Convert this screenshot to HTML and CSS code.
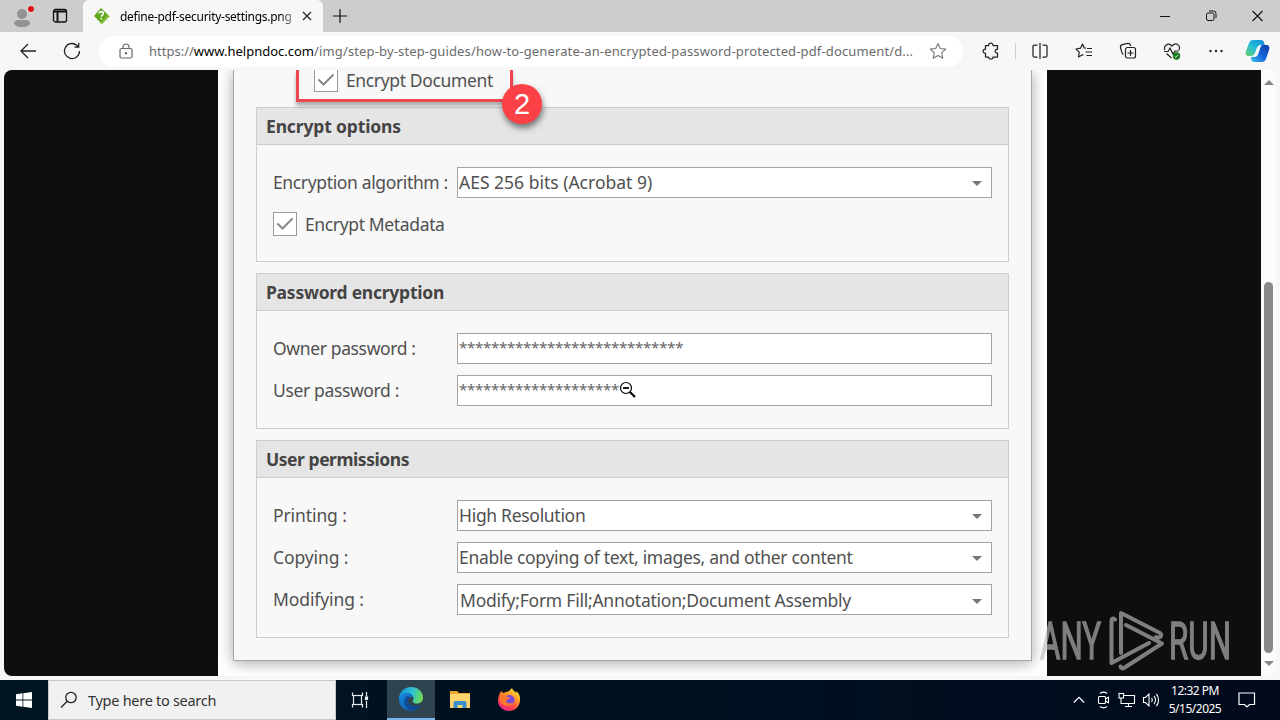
FILE: index.html
```
<!DOCTYPE html>
<html lang="en">
<head>
    <meta charset="UTF-8">
    <meta name="viewport" content="width=device-width, initial-scale=1.0">
    <title>define-pdf-security-settings.png</title>
    <link rel="stylesheet" href="styles.css">
</head>
<body>
    <div class="desktop">
        <div class="tabbar">
            <div class="tab-tools">
                <svg class="profile" width="24" height="24" viewBox="0 0 24 24">
                    <circle cx="12" cy="10" r="5" fill="#929292"/>
                    <path d="M4 20c0-3 2-4 4-4h8c2 0 4 1 4 4-2 2.500-5 3-8 3s-6-.5-8-3z" fill="#929292"/>
                    <circle cx="21" cy="5" r="4" fill="#e8d2d2"/>
                    <circle cx="21" cy="5" r="3" fill="#d9141c"/>
                </svg>
                <svg class="tabs-icon" width="16" height="16" viewBox="0 0 16 16" fill="none" stroke="#111" stroke-width="1.300">
                    <rect x="1.500" y="1.500" width="13" height="12.500" rx="2"/>
                    <path d="M2 3.500h12M5.500 4v9.500" stroke-width="2"/>
                </svg>
            </div>
            <div class="tab">
                <svg width="18" height="18" viewBox="0 0 18 18">
                    <path d="M8 1l7 7-7 8-7-7z" fill="#5fa81c"/>
                    <path d="M15 8l2 1-8 8-2-1z" fill="#7fbc36"/>
                    <path d="M6.300 6.500c0-2.500 4-2.500 4 0 0 1.700-2 1.500-2 3.200M8.300 11v1.500" fill="none" stroke="#fff" stroke-width="1.600"/>
                </svg>
                <span class="tab-title">define-pdf-security-settings.png</span>
                <svg class="tab-close" width="10" height="10" viewBox="0 0 10 10" stroke="#222" stroke-width="1.200"><path d="M1 1l8 8M9 1l-8 8"/></svg>
            </div>
            <svg class="new-tab" width="14" height="14" viewBox="0 0 14 14" stroke="#111" stroke-width="1.200"><path d="M7 0v14M0 7h14"/></svg>
            <div class="window-buttons">
                <svg width="11" height="12" viewBox="0 0 11 12" stroke="#111"><path d="M0 6.500h10"/></svg>
                <svg width="11" height="12" viewBox="0 0 11 12" fill="none" stroke="#111"><rect x=".5" y="3" width="7.500" height="7.500" rx="1.500"/><path d="M3 1h4.500a2.500 2.500 0 0 1 2.500 2.500v4.500"/></svg>
                <svg width="11" height="12" viewBox="0 0 11 12" stroke="#111" stroke-width="1.100"><path d="M.5 1l10 10M10.500 1l-10 10"/></svg>
            </div>
        </div>

        <div class="toolbar">
            <svg class="back" width="18" height="16" viewBox="0 0 18 16" fill="none" stroke="#222" stroke-width="1.300"><path d="M17 8H2M9 1L2 8l7 7"/></svg>
            <svg class="reload" width="18" height="18" viewBox="0 0 18 18" fill="none" stroke="#222" stroke-width="1.300"><path d="M16.500 9a7.500 7.500 0 1 1-2.800-5.800L15.500 5M15.700 1v4.200h-4.200"/></svg>
            <div class="address">
                <svg class="lock" width="14" height="16" viewBox="0 0 14 16" fill="none" stroke="#666" stroke-width="1.200"><rect x="1" y="5.500" width="12" height="9.500" rx="1.500"/><path d="M4 5.500V4a3 3 0 0 1 6 0v1.500"/><circle cx="7" cy="10.300" r=".6" fill="#555"/></svg>
                <div class="url"><span class="scheme">https://</span><span class="domain">www.helpndoc.com</span><span class="path">/img/step-by-step-guides/how-to-generate-an-encrypted-password-protected-pdf-document/d...</span></div>
                <svg class="star" width="18" height="18" viewBox="0 0 18 18" fill="none" stroke="#777" stroke-width="1.100" stroke-linejoin="round"><path d="M9 1.500l2.300 5 5.400.6-4 3.700 1.100 5.400L9 13.500l-4.800 2.700 1.100-5.400-4-3.700 5.400-.6z"/></svg>
            </div>
            <div class="actions">
                <svg width="18" height="18" viewBox="0 0 18 18" fill="none" stroke="#222" stroke-width="1.250" stroke-linejoin="round"><path d="M3.500 3.500h3.200c-.3-3.300 4.600-3.300 4.300 0h4.500v3.700c-3-.3-3 4.300 0 4v3.800H11c.3 2.900-4.600 2.900-4.300 0H3.500v-3.800c-3.200.3-3.200-4.300 0-4z"/></svg>
                <i class="divider"></i>
                <svg width="18" height="18" viewBox="0 0 18 18" fill="none" stroke="#222" stroke-width="1.250"><path d="M9 1v16M6.500 3H3.200C2.400 3 2 3.500 2 4.200v9.600c0 .7.400 1.200 1.200 1.200h3.300M11.500 3h3.300c.8 0 1.200.5 1.200 1.200v9.600c0 .7-.4 1.200-1.200 1.200h-3.300"/></svg>
                <svg width="18" height="18" viewBox="0 0 18 18" fill="none" stroke="#222" stroke-width="1.200" stroke-linejoin="round"><path d="M11 6.200L9.300 6 7.500 2 5.500 6.200 1 7l3.300 3.300L3.500 15l4-2.300 1 .6M12 6.500h5M10.500 10H17M11.500 13.500H17"/></svg>
                <svg width="18" height="18" viewBox="0 0 18 18" fill="none" stroke="#222" stroke-width="1.200"><rect x="6.500" y="5.500" width="10" height="10.500" rx="2"/><path d="M11.500 8v6M8.500 11h6M4.500 12.500C3 12 2.800 10.500 2.500 9L1.500 5.500C1.200 4 2 3 3.500 2.600l5-1.200c1.500-.3 2.500.3 3 1.800l.3 1"/></svg>
                <svg width="18" height="18" viewBox="0 0 18 18" fill="none" stroke="#222" stroke-width="1.200"><path d="M2 8C0 4.500 5-.500 9 4c4-4.500 9-.5 7 4M1 9.500h4L7 6l3 6 2-3h4M3.500 11.500L8.500 16"/><circle cx="13.500" cy="14" r="3.700" fill="#16791d" stroke="none"/><path d="M11.700 14.300l1.200 1 2.300-2.500" stroke="#fff" stroke-width=".8"/></svg>
                <svg width="18" height="18" viewBox="0 0 18 18" fill="#222"><circle cx="3.500" cy="9" r="1.200"/><circle cx="9" cy="9" r="1.200"/><circle cx="14.500" cy="9" r="1.200"/></svg>
            </div>
            <svg class="copilot" width="26" height="24" viewBox="0 0 26 24">
                <defs>
                    <linearGradient id="cp1" x1="1" y1="0" x2="0" y2="1"><stop stop-color="#1686da"/><stop offset=".5" stop-color="#22bbdc"/><stop offset="1" stop-color="#6bd36a"/></linearGradient>
                    <linearGradient id="cp2" x1="1" y1="0" x2="0" y2="1"><stop stop-color="#123ba6"/><stop offset=".55" stop-color="#1768dc"/><stop offset="1" stop-color="#3bc7ef"/></linearGradient>
                </defs>
                <path d="M8 1h8c3 0 3 3 4 5h-4c-3 0-4 2-5 5l-1 3c-1 2-2 3-4 3H4c-3 0-4-2-3-5l3-8c1-2 2-3 4-3z" fill="url(#cp1)"/>
                <path d="M18 6h3c3 0 4 2 3 5l-3 9c-1 2-2 3-4 3H9c-2 0-3-2-3-5h3c3 0 4-2 5-5l1-4c.5-2 1.500-3 3-3z" fill="url(#cp2)"/>
                <path d="M16 7c-3 0-4 2-4.500 4.500L10 16.500c2-.5 3-2 3.500-4z" fill="#f4f8fa"/>
            </svg>
        </div>

        <div class="viewport">
            <div class="page">
                <div class="image">
                    <div class="dialog">
                        <div class="encrypt-document">
                            <div class="highlight">
                                <span class="checkbox"><svg width="18" height="14" viewBox="0 0 18 14"><path d="M1.500 6.500L6.500 11.500 16.500 1.500"/></svg></span>
                                <span class="label">Encrypt Document</span>
                                <span class="step">2</span>
                            </div>
                        </div>

                        <div class="group group-options">
                            <h2>Encrypt options</h2>
                            <div class="row">
                                <span class="label">Encryption algorithm :</span>
                                <div class="field select algorithm"><span>AES 256 bits (Acrobat 9)</span></div>
                            </div>
                            <div class="row">
                                <span class="checkbox"><svg width="18" height="14" viewBox="0 0 18 14"><path d="M1.500 6.500L6.500 11.500 16.500 1.500"/></svg></span>
                                <span class="label">Encrypt Metadata</span>
                            </div>
                        </div>

                        <div class="group group-password">
                            <h2>Password encryption</h2>
                            <div class="row">
                                <span class="label">Owner password :</span>
                                <div class="field password"><span>****************************</span></div>
                            </div>
                            <div class="row">
                                <span class="label">User password :</span>
                                <div class="field password"><span>********************</span></div>
                            </div>
                        </div>

                        <div class="group group-permissions">
                            <h2>User permissions</h2>
                            <div class="row">
                                <span class="label">Printing :</span>
                                <div class="field select"><span>High Resolution</span></div>
                            </div>
                            <div class="row">
                                <span class="label">Copying :</span>
                                <div class="field select"><span>Enable copying of text, images, and other content</span></div>
                            </div>
                            <div class="row">
                                <span class="label">Modifying :</span>
                                <div class="field select modify"><span>Modify;Form Fill;Annotation;Document Assembly</span></div>
                            </div>
                        </div>
                    </div>
                </div>
            </div>
            <div class="scrollbar">
                <i class="arrow-up"></i>
                <i class="thumb"></i>
                <i class="arrow-down"></i>
            </div>
        </div>

        <div class="taskbar">
            <div class="start">
                <svg width="16" height="16" viewBox="0 0 16 16" fill="#fff"><path d="M0 2.200l6.500-.9v6.300H0zM7.300 1.200L16 0v7.600H7.300zM0 8.400h6.500v6.300L0 13.800zM7.300 8.400H16V16l-8.700-1.200z"/></svg>
            </div>
            <div class="search">
                <svg width="18" height="18" viewBox="0 0 18 18" fill="none" stroke="#222" stroke-width="1.300"><circle cx="11" cy="6.500" r="5.200"/><path d="M7.200 10.300L1 16.500"/></svg>
                <span>Type here to search</span>
            </div>
            <div class="app task-view">
                <svg width="18" height="18" viewBox="0 0 18 18" fill="none" stroke="#e8edf0" stroke-width="1.200"><path d="M1.500 1.500v3h10v-3M1.500 16.500v-3h10v3M15.500 1v4M15.500 10v7"/><rect x="2.500" y="4.500" width="8" height="9"/><rect x="14.500" y="6" width="2" height="2.500" fill="#fff"/></svg>
            </div>
            <div class="app active">
                <svg width="24" height="24" viewBox="0 0 24 24">
                    <defs>
                        <linearGradient id="eg1" x1="0" y1=".3" x2="1" y2=".5"><stop stop-color="#168fd2"/><stop offset=".55" stop-color="#32c2d0"/><stop offset="1" stop-color="#6edb50"/></linearGradient>
                        <linearGradient id="eg2" x1="0" y1="0" x2="1" y2="1"><stop stop-color="#1689dc"/><stop offset="1" stop-color="#0c4fa0"/></linearGradient>
                    </defs>
                    <path d="M0 12C0 5 5 0 12 0c7 0 12 5 12 10.500 0 4-3 6-6 6-3.500 0-5-1.500-4-3 1.500-2.500 0-5-4-5-5 0-8 2-10 3.500z" fill="url(#eg1)"/>
                    <path d="M0 12c0-4 4-6 8-6 4 0 6 2 6 4.500-3-1.500-6 1-5 4.500 1 4 6 5.500 12 3.500-2 3.500-5 5.500-9 5.500C5 24 0 19 0 12z" fill="url(#eg2)"/>
                    <path d="M8 9c-5 4-3 12 5 14.800 4-.3 7-2.500 8.500-5.300-6 2-11 .5-12.400-3.500C8.500 13 9 11 11 10z" fill="#104b94"/>
                </svg>
            </div>
            <div class="app">
                <svg width="22" height="20" viewBox="0 0 22 20"><path d="M1 1h7l2 2h11v15H1z" fill="#e9a92d"/><path d="M1 4h20v14H1z" fill="#ffd66b"/><path d="M4.500 18v-5c0-1 .5-2 2-2h9c1.500 0 2 1 2 2v5h-4v-3h-5v3z" fill="#3a8fd0"/></svg>
            </div>
            <div class="app">
                <svg width="24" height="24" viewBox="0 0 24 24">
                    <defs><linearGradient id="ff" x1=".9" y1="0" x2=".3" y2="1"><stop stop-color="#fff04a"/><stop offset=".4" stop-color="#ff9a22"/><stop offset=".75" stop-color="#ff4050"/><stop offset="1" stop-color="#e6258a"/></linearGradient></defs>
                    <path d="M3 5l1.500-2L6 5l3-1c1 0 2-.5 3-1l3-3c1 3 3 3 4 5l.5-2c3 3 4 6 3.500 10-.7 6-5 10-11 10S1 18.500 1 13c0-3 .7-6 2-8z" fill="url(#ff)"/>
                    <circle cx="12.500" cy="12" r="5" fill="#7849d6"/>
                    <path d="M3 8c3-2 6-.5 7 1l3 .5c0 2-3 1.500-4 3.500 1 3 5 3 7 1-1 6-11 5-13-1z" fill="#ff762e"/>
                </svg>
            </div>
            <div class="tray">
                <svg width="12" height="12" viewBox="0 0 12 12" fill="none" stroke="#fff" stroke-width="1.200"><path d="M.8 8.500L6 3.300l5.200 5.200"/></svg>
                <svg class="meet" width="14" height="18" viewBox="0 0 14 18" fill="none" stroke="#fff" stroke-width="1.100"><rect x="1.500" y="5.500" width="7" height="7" rx="1"/><path d="M8.500 8l3-1.800v5.600l-3-1.800M3 2.500c2-1.500 5-1.500 7 0M3 15.500c2 1.500 5 1.500 7 0"/></svg>
                <svg class="network" width="18" height="16" viewBox="0 0 18 16" fill="none" stroke="#fff" stroke-width="1.100"><path d="M6 3.500h10.500v8H5M10.500 11.500v3M7 14.500h7M3 6v5.500h2"/><rect x="1" y="1.500" width="4.500" height="4.500"/></svg>
                <svg class="volume" width="18" height="16" viewBox="0 0 18 16" fill="none" stroke="#fff" stroke-width="1.100"><path d="M1.500 5.500h2L7 2v12l-3.500-3.500h-2zM9.500 6c1 1 1 3 0 4M12 4c2 2 2 6 0 8M14.300 2c3 3 3 9 0 12"/></svg>
                <div class="clock">
                    <span class="time">12:32 PM</span>
                    <span class="date">5/15/2025</span>
                </div>
                <svg class="notifications" width="18" height="18" viewBox="0 0 18 18" fill="none" stroke="#fff" stroke-width="1.200"><path d="M1 2h15.500v11.500h-5L9 16l-2.500-2.500H1z"/></svg>
            </div>
        </div>

        <!-- magnifier cursor -->
        <svg class="cursor" width="18" height="18" viewBox="0 0 18 18">
            <path d="M10.500 10.500l5.500 5.500" stroke="#000" stroke-width="2.200"/>
            <circle cx="7" cy="7" r="5.500" fill="#fff" stroke="#000" stroke-width="1.200"/>
            <path d="M4 7h6" stroke="#000" stroke-width="1.800"/>
        </svg>

        <svg class="watermark" width="194" height="64" viewBox="0 0 194 64">
            <text x="2" y="50.500" textLength="61" lengthAdjust="spacingAndGlyphs">ANY</text>
            <g fill="none" stroke-width="4" stroke-linejoin="round" stroke-linecap="round">
                <path d="M77 11.500c-2-2-3.500-1-3.500 1.500v42L111 35"/>
                <path d="M83 45V5L122 25c3 2 0 6-4 4"/>
                <path d="M88 17l36 18.500L86 60c-1.500 1-3 0-3.500-1.500"/>
            </g>
            <text x="131" y="50.500" textLength="62" lengthAdjust="spacingAndGlyphs">RUN</text>
        </svg>
    </div>
</body>
</html>
```
FILE: styles.css
```
* {
    box-sizing: border-box;
}
body {
    margin: 0;
    font-family: "Noto Sans", "Open Sans", sans-serif;
    background: #f7f7f7;
    overflow: hidden;
}
svg {
    display: block;
    flex: none;
}
.desktop {
    position: relative;
    width: 1280px;
    height: 720px;
    display: flex;
    flex-direction: column;
    overflow: hidden;
}

/* browser tabs */
.tabbar {
    height: 32px;
    display: flex;
    align-items: center;
    background: #cdcdcd;
}
.tab-tools {
    width: 83px;
    height: 32px;
    display: flex;
    align-items: center;
    padding-left: 10px;
    gap: 18px;
}
.tab {
    width: 240px;
    height: 32px;
    display: flex;
    align-items: center;
    padding: 0 11px 0 10px;
    background: #f7f7f7;
    border-radius: 6px 6px 0 0;
}
.tab-title {
    width: 174px;
    margin: 0 8px 0 9px;
    flex: none;
    font-size: 12px;
    letter-spacing: -0.28px;
    white-space: nowrap;
    color: #000;
    -webkit-mask-image: linear-gradient(90deg, #000 92%, rgba(0, 0, 0, 0.35));
}
.new-tab {
    margin-left: 10px;
}
.window-buttons {
    display: flex;
    gap: 35px;
    margin-left: auto;
    padding-right: 17px;
}

/* toolbar */
.toolbar {
    height: 38px;
    display: flex;
    align-items: center;
    padding-left: 19px;
    background: #f7f7f7;
}
.reload {
    margin-left: 26px;
}
.address {
    width: 864px;
    height: 31px;
    margin-left: 18px;
    padding-left: 20px;
    display: flex;
    align-items: center;
    background: #fff;
    border-radius: 16px;
}
.url {
    width: 768px;
    margin-left: 16px;
    flex: none;
    font-size: 13px;
    color: #6b6b6b;
    white-space: nowrap;
}
.domain {
    color: #000;
}
.path {
    letter-spacing: 0.14px;
}
.star {
    margin-left: 12px;
}
.actions {
    display: flex;
    align-items: center;
    gap: 26px;
    margin-left: 19px;
}
.divider {
    width: 1px;
    height: 16px;
    margin: 0 -11px;
    background: #d0d0d0;
}
.copilot {
    margin-left: 20px;
}

/* page area */
.viewport {
    height: 610px;
    display: flex;
    padding: 0 4px 4px;
    background: #f7f7f7;
}
.page {
    width: 1257px;
    height: 606px;
    padding: 0 214px;
    background: #0e0e0e;
    border-radius: 8px 0 0 8px;
    overflow: hidden;
}
.image {
    width: 829px;
    height: 606px;
    padding: 0 15px;
    background: #fff;
}
.dialog {
    width: 799px;
    height: 591px;
    padding: 0 22px;
    background: #f8f8f8;
    border: 1px solid #a6a6a6;
    border-top: 0;
    box-shadow: 0 2px 14px rgba(0, 0, 0, 0.35);
    font-size: 17.5px;
    letter-spacing: -0.3px;
    color: #505050;
}
.encrypt-document {
    height: 37px;
    padding-left: 40px;
}
.highlight {
    position: relative;
    width: 217px;
    height: 32px;
    padding: 0 0 9px 15px;
    display: flex;
    align-items: center;
    border: 3px solid #ee4650;
    border-top: 0;
    box-shadow: 0 4px 4px rgba(0, 0, 0, 0.3);
}
.checkbox {
    width: 24px;
    height: 24px;
    margin: -1px 8px 0 0;
    display: flex;
    flex: none;
    align-items: center;
    justify-content: center;
    background: #fff;
    border: 1px solid #999;
}
.checkbox path {
    fill: none;
    stroke: #888;
    stroke-width: 2;
}
.step {
    position: absolute;
    left: 203px;
    top: 14px;
    width: 40px;
    height: 40px;
    border-radius: 50%;
    background: #fc4146;
    box-shadow: 1px 4px 6px rgba(0, 0, 0, 0.5);
    color: #fff;
    font: 29px/41px "Liberation Sans", Arial, sans-serif;
    text-align: center;
}
.group {
    width: 753px;
    border: 1px solid #cdcdcd;
}
.group-options {
    height: 155px;
}
.group-password {
    height: 156px;
    margin-top: 11px;
}
.group-permissions {
    height: 198px;
    margin-top: 11px;
}
.group h2 {
    height: 37px;
    margin: 0 0 22px;
    padding-left: 9px;
    background: #e5e5e5;
    border-bottom: 1px solid #cdcdcd;
    font-size: 17.5px;
    line-height: 37px;
    color: #444;
}
.group-options h2 {
    letter-spacing: -0.15px;
}
.group-password h2 {
    letter-spacing: -0.25px;
}
.group-permissions h2 {
    letter-spacing: -0.46px;
}
.row {
    height: 31px;
    margin-bottom: 11px;
    padding-left: 16px;
    display: flex;
    align-items: center;
    white-space: nowrap;
}
.label {
    width: 184px;
    padding-bottom: 1px;
    flex: none;
    letter-spacing: -0.36px;
}
.group-permissions .label {
    letter-spacing: -0.1px;
}
.field {
    width: 535px;
    height: 31px;
    padding: 0 0 1px 1px;
    display: flex;
    align-items: center;
    background: #fff;
    border: 1px solid #a3a3a3;
}
.select {
    justify-content: space-between;
    padding-right: 9px;
}
.select::after {
    content: "";
    margin-top: 2px;
    border: 5px solid transparent;
    border-top-color: #777;
    border-bottom: 0;
}
.algorithm {
    letter-spacing: 0;
}
.modify {
    padding: 1px 9px 0 2px;
    letter-spacing: -0.24px;
}
.password {
    padding-bottom: 4px;
    font-size: 15px;
    letter-spacing: -0.26px;
    color: #666;
}

/* scrollbar */
.scrollbar {
    width: 15px;
    height: 606px;
    display: flex;
    flex-direction: column;
    align-items: center;
    background: #fcfcfc;
    border-radius: 0 8px 8px 0;
}
.arrow-up {
    margin-top: 10px;
    border: 5px solid transparent;
    border-top: 0;
    border-bottom-color: #858585;
}
.thumb {
    width: 9px;
    height: 371px;
    margin-top: 197px;
    border-radius: 5px;
    background: #8a8a8a;
}
.arrow-down {
    margin-top: 8px;
    border: 5px solid transparent;
    border-bottom: 0;
    border-top-color: #858585;
}

/* taskbar */
.taskbar {
    height: 40px;
    display: flex;
    background: linear-gradient(90deg, #00151f, #001020 60%, #020a1c);
}
.start,
.app {
    width: 48px;
    height: 40px;
    display: flex;
    align-items: center;
    justify-content: center;
}
.app {
    width: 49px;
}
.task-view {
    width: 51px;
    padding-right: 3px;
}
.active {
    width: 48px;
    background: #304450;
    border-bottom: 2px solid #76b9ed;
}
.search {
    width: 288px;
    padding-left: 11px;
    display: flex;
    align-items: center;
    gap: 10px;
    background: #f1f1f1;
    border: 1px solid #c8c8c8;
    font-size: 14.5px;
    letter-spacing: -0.28px;
    color: #333;
}
.tray {
    display: flex;
    align-items: center;
    margin-left: auto;
    padding-right: 24px;
    color: #fff;
}
.meet {
    margin-left: 12px;
}
.network {
    margin-left: 7px;
}
.volume {
    margin-left: 6px;
}
.clock {
    width: 66px;
    margin: -1px 10px 0 2px;
    display: flex;
    flex-direction: column;
    align-items: center;
    font-size: 12px;
    line-height: 18px;
    letter-spacing: -0.5px;
    white-space: nowrap;
}

/* overlays */
.cursor {
    position: absolute;
    left: 619px;
    top: 381px;
}
.watermark {
    position: absolute;
    left: 1038px;
    top: 608px;
    opacity: 0.65;
    overflow: visible;
}
.watermark text {
    font-family: Roboto, sans-serif;
    font-size: 51px;
    fill: #bcbcbc;
    stroke: #bcbcbc;
    stroke-width: 1.4;
}
.watermark g {
    stroke: #bcbcbc;
}
```
